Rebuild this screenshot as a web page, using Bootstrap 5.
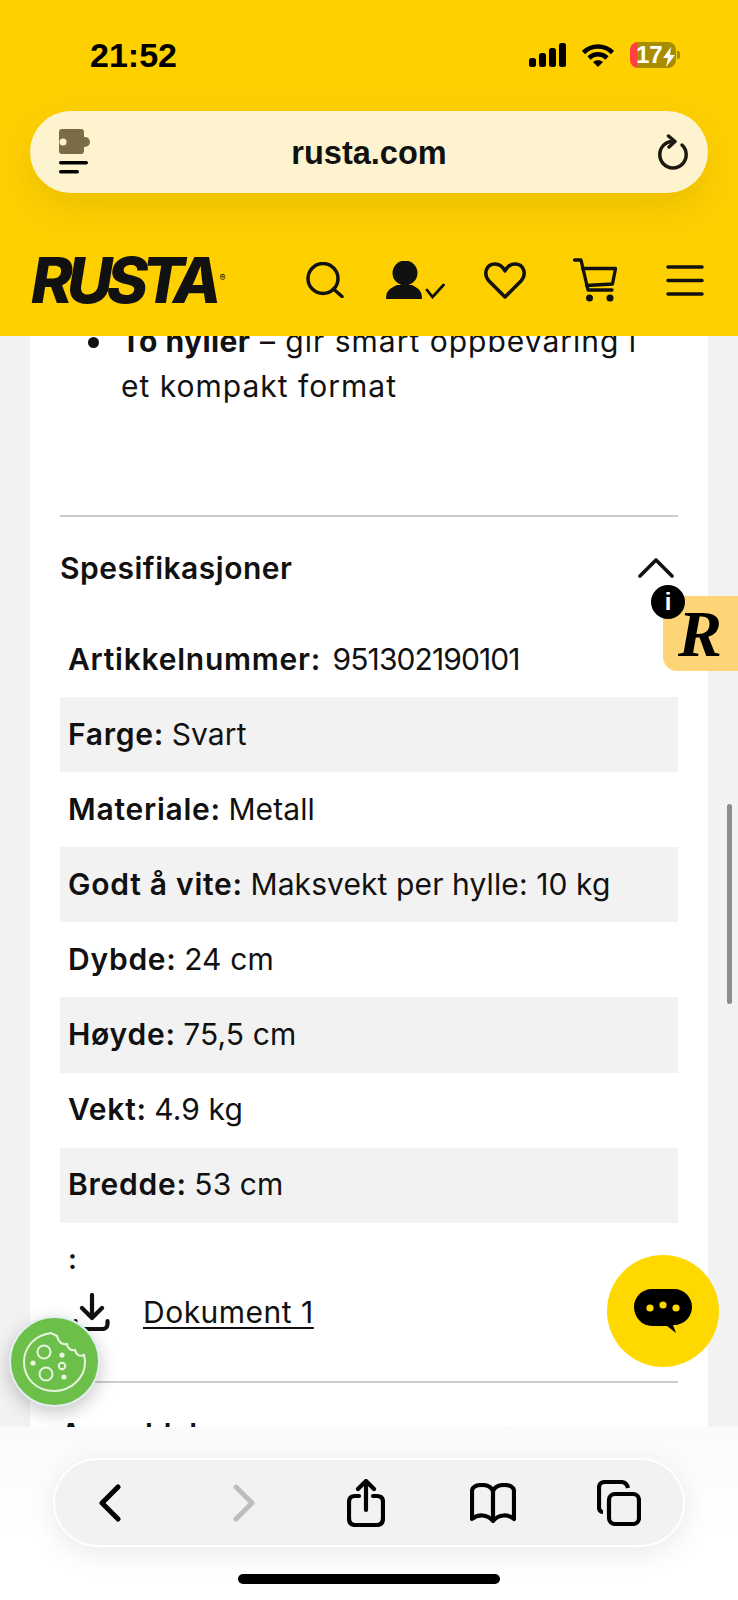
<!DOCTYPE html>
<html lang="no">
<head>
    <meta charset="UTF-8">
    <meta name="viewport" content="width=device-width, initial-scale=1.0">
    <title>Rusta</title>
    <link rel="stylesheet" href="https://cdn.jsdelivr.net/npm/bootstrap@5.3.3/dist/css/bootstrap.min.css">
    <style>
        body { height: 1600px; overflow: hidden; background: #f2f2f2; color: #111; font-family: Inter, "Noto Sans", sans-serif; position: relative; }

        /* top chrome */
        .top-chrome { height: 336px; position: relative; z-index: 5; background: #ffd000; }
        .status-row { height: 111px; padding: 42px 58px 0 90px; }
        .clock { font: 700 34px/27px "Liberation Sans", sans-serif; color: #000; }
        .battery { width: 46px; height: 26px; border-radius: 8px; background: linear-gradient(90deg, #ff4040 0, #ff4040 15%, #a98d00 15%); color: #fff; font: 700 24px/26px "Liberation Sans", sans-serif; padding-left: 6px; white-space: nowrap; }
        .battery-cap { width: 3px; height: 8px; margin-left: 1px; border-radius: 0 2px 2px 0; background: #a98d00; }
        .url-pill { height: 82px; margin: 0 30px; padding: 0 20px 0 29px; border-radius: 41px; background: #fdf3cf; box-shadow: 0 14px 36px rgba(130,100,0,.16); }
        .url-text { font: 700 32.500px/1 "Liberation Sans", sans-serif; color: #111; padding-right: 11px; padding-top: 2px; }
        .site-nav { height: 143px; padding: 31px 8px 0 31px; }
        .rusta-logo { font: italic 800 63px/1 Inter, sans-serif; letter-spacing: -6px; color: #111; }
        .rusta-logo sup { font-size: 9px; font-weight: 400; font-style: normal; letter-spacing: 0; top: -22px; margin-left: 4px; }
        .nav-cell { width: 90px; }

        /* page */
        .page-card { margin: -17px 30px 0; padding: 0 30px; background: #fff; height: 1200px; font-size: 30px; line-height: 45px; }
        .feat-list { padding: 0 30px 0 61px; margin-bottom: 0; letter-spacing: 1px; list-style: none; }
        .feat-list li::before { content: ""; display: inline-block; width: 11px; height: 11px; margin: 0 22.500px 0 -33.500px; border-radius: 50%; background: #111; vertical-align: .12em; }
        .feat-list b { font-weight: 700; letter-spacing: .4px; }
        .rule-top { margin: 106px 0 0; border-top: 2px solid #ccc; opacity: 1; }
        .spec-head { height: 105px; padding-bottom: 3px; font-size: 30px; font-weight: 600; letter-spacing: .5px; }
        .spec-table { margin-bottom: 0; --bs-table-bg: transparent; --bs-table-color: #111; }
        .spec-table td { height: 75.1px; padding: 0 8px 2px; vertical-align: middle; font-size: 30px; line-height: 1; letter-spacing: .1px; }
        .spec-table tr:nth-child(even) td { background: #f2f2f2; }
        .spec-table b { font-weight: 600; letter-spacing: .75px; margin-right: -1px; }
        .art-no { letter-spacing: -.9px; margin-left: 4px; }
        .colon-row { padding: 20px 0 0 8px; font-size: 28px; line-height: 32px; font-weight: 600; }
        .doc-row { height: 71px; margin-top: 2px; padding-left: 13px; gap: 33px; }
        .doc-row a { color: #111; font-size: 30px; letter-spacing: .5px; text-underline-offset: 4px; text-decoration-thickness: 2px; }
        .rule-bottom { margin: 33px 0 0; border-top: 2px solid #ccc; opacity: 1; }
        .next-head { margin-top: 31px; font-size: 30px; font-weight: 600; line-height: 40px; }

        /* floating stuff */
        .float-tab { position: absolute; z-index: 3; left: 663px; top: 596px; width: 75px; height: 75px; background: #fdd576; border-radius: 14px 0 0 14px; font: italic 700 66px/76px "Liberation Serif", serif; color: #000; padding-left: 15px; }
        .float-info { position: absolute; z-index: 4; left: 651px; top: 585px; width: 34px; height: 34px; border-radius: 50%; background: #000; color: #fff; font: 700 24px/34px "Liberation Sans", sans-serif; text-align: center; }
        .float-chat { position: absolute; z-index: 3; left: 607px; top: 1255px; width: 112px; height: 112px; border-radius: 50%; background: #ffd800; }
        .float-cookie { position: absolute; z-index: 3; left: 9px; top: 1316px; width: 91px; height: 91px; border-radius: 50%; background: #6cc04a; border: 2px solid #e3eef0; box-shadow: 0 6px 18px rgba(0,0,0,.22); }
        .scroll-thumb { position: absolute; z-index: 3; left: 727px; top: 804px; width: 5px; height: 200px; border-radius: 3px; background: #8d8d8d; }

        /* safari bottom bar */
        .bottom-chrome { position: absolute; z-index: 6; left: 0; right: 0; bottom: 0; height: 173px; background: linear-gradient(#fafafa, #fbfbfb 12px, #fff 60%); }
        .tool-pill { position: absolute; left: 53px; top: 31px; width: 632px; height: 89px; border-radius: 45px; background: #f2f2f2; border: 2px solid #fff; box-shadow: 0 6px 30px rgba(0,0,0,.09); }
        .tb-back { margin-left: 44px; }
        .tb-fwd { margin-left: 112px; }
        .tb-share { margin-left: 92px; }
        .tb-book { margin-left: 85px; }
        .tb-tabs { margin-left: 81px; }
        .home-bar { position: absolute; left: 238px; top: 147px; width: 262px; height: 10px; border-radius: 5px; background: #000; }
    </style>
</head>
<body>
    <div class="top-chrome">
        <div class="status-row d-flex justify-content-between align-items-start">
            <span class="clock">21:52</span>
            <div class="d-flex align-items-center">
                <svg width="37" height="24" viewBox="0 0 37 24" fill="#000">
                    <rect x="0" y="15" width="7" height="9" rx="2.500"/>
                    <rect x="10" y="10" width="7" height="14" rx="2.500"/>
                    <rect x="20" y="5" width="7" height="19" rx="2.500"/>
                    <rect x="30" y="0" width="7" height="24" rx="2.500"/>
                </svg>
                <svg class="ms-3" width="32" height="23" viewBox="0 0 32 23" fill="none" stroke="#000" stroke-width="4.600">
                    <path d="M1.500 8.500 C9.500 0.500 22.500 0.500 30.500 8.500"/>
                    <path d="M7 14 C12 9 20 9 25 14"/>
                    <path d="M16 23 L11 18 C14 15.500 18 15.500 21 18 Z" fill="#000" stroke="none"/>
                </svg>
                <div class="battery ms-3">17<svg width="12" height="20" viewBox="0 0 12 20" fill="#fff"><path d="M8 0 L0 11 H5 L3 20 L12 8 H7 Z"/></svg></div>
                <div class="battery-cap"></div>
            </div>
        </div>
        <div class="url-pill d-flex align-items-center justify-content-between">
            <svg width="32" height="46" viewBox="0 0 32 46">
                <rect x="0" y="0" width="25" height="25" rx="3" fill="#7a6d45"/>
                <circle cx="26" cy="13" r="5" fill="#7a6d45"/>
                <circle cx="4" cy="13" r="3.500" fill="#fdf3cf"/>
                <rect x="0" y="32" width="29" height="3.500" rx="1.700" fill="#000"/>
                <rect x="0" y="41" width="20" height="3.500" rx="1.700" fill="#000"/>
            </svg>
            <span class="url-text">rusta.com</span>
            <svg width="30" height="36" viewBox="0 0 30 36" fill="none" stroke="#1c1a10" stroke-width="3.500" stroke-linecap="round" stroke-linejoin="round">
                <path d="M15 7.500 C7 7.500 1.800 13.500 1.800 20.500 C1.800 28 7.500 34 15 34 C22.500 34 28.200 28 28.200 20.500 C28.200 16.500 26.700 13.500 24 11"/>
                <path d="M10.500 2 L17 7.500 L11 13"/>
            </svg>
        </div>
        <nav class="site-nav d-flex align-items-center justify-content-between">
            <span class="rusta-logo">RUSTA<sup>®</sup></span>
            <div class="d-flex align-items-center">
                <div class="nav-cell d-flex justify-content-center">
                    <svg width="38" height="36" viewBox="0 0 38 36" fill="none" stroke="#111" stroke-width="3.500" stroke-linecap="round">
                        <circle cx="17" cy="16.500" r="15"/><path d="M27.500 27 L36 34.500"/>
                    </svg>
                </div>
                <div class="nav-cell d-flex justify-content-center">
                    <svg width="59" height="38" viewBox="0 0 59 38" fill="#111">
                        <ellipse cx="19" cy="12" rx="12.500" ry="12.500"/>
                        <path d="M0 38 C0 31 2 28 11 24 H26 C34 28 36 31 36 38 Z"/>
                        <path d="M41 29 L46.500 36 L57.500 24" fill="none" stroke="#111" stroke-width="2.800" stroke-linecap="round"/>
                    </svg>
                </div>
                <div class="nav-cell d-flex justify-content-center">
                    <svg width="42" height="37" viewBox="0 0 42 37" fill="none" stroke="#111" stroke-width="3.500" stroke-linejoin="round">
                        <path d="M21 35 L5 19 C-1 12 2 2 11 2 C16 2 19 5 21 9 C23 5 26 2 31 2 C40 2 43 12 37 19 Z"/>
                    </svg>
                </div>
                <div class="nav-cell d-flex justify-content-center">
                    <svg width="44" height="44" viewBox="0 0 44 44" fill="none" stroke="#111" stroke-width="3.300" stroke-linecap="round" stroke-linejoin="round">
                        <path d="M1.500 2 H8 L15 32 H39"/>
                        <path d="M9.500 10.500 H42.500 L39.500 26 L13.500 27.500"/>
                        <circle cx="16.500" cy="40" r="3.500" fill="#111" stroke="none"/>
                        <circle cx="37" cy="40" r="3.500" fill="#111" stroke="none"/>
                    </svg>
                </div>
                <div class="nav-cell d-flex justify-content-center">
                    <svg width="38" height="31" viewBox="0 0 38 31" stroke="#111" stroke-width="3.500" stroke-linecap="round">
                        <path d="M2 2 H36 M2 15.500 H36 M2 29 H36"/>
                    </svg>
                </div>
            </div>
        </nav>
    </div>

    <main class="page-card">
        <ul class="feat-list">
            <li><b>To hyller</b> – gir smart oppbevaring i et kompakt format</li>
        </ul>
        <hr class="rule-top">
        <div class="spec-head d-flex justify-content-between align-items-center">
            <span>Spesifikasjoner</span>
            <svg class="me-1" width="36" height="20" viewBox="0 0 36 20" fill="none" stroke="#111" stroke-width="3.600" stroke-linecap="round" stroke-linejoin="round">
                <path d="M2 18 L18 2 L34 18"/>
            </svg>
        </div>
        <table class="table table-borderless spec-table">
            <tbody>
                <tr><td><b>Artikkelnummer:</b> <span class="art-no">951302190101</span></td></tr>
                <tr><td><b>Farge:</b> Svart</td></tr>
                <tr><td><b>Materiale:</b> Metall</td></tr>
                <tr><td><b>Godt å vite:</b> Maksvekt per hylle: 10 kg</td></tr>
                <tr><td><b>Dybde:</b> 24 cm</td></tr>
                <tr><td><b>Høyde:</b> 75,5 cm</td></tr>
                <tr><td><b>Vekt:</b> 4.9 kg</td></tr>
                <tr><td><b>Bredde:</b> 53 cm</td></tr>
            </tbody>
        </table>
        <div class="colon-row">:</div>
        <div class="doc-row d-flex align-items-center">
            <svg width="37" height="38" viewBox="0 0 37 38" fill="none" stroke="#111" stroke-width="4.200" stroke-linecap="round" stroke-linejoin="round">
                <path d="M19 2 V24 M9 15 L19 25 L29 15"/>
                <path d="M2.500 28 V31 C2.500 34 4.500 36 7.500 36 H29.500 C32.500 36 34.500 34 34.500 31 V28"/>
            </svg>
            <a href="#">Dokument 1</a>
        </div>
        <hr class="rule-bottom">
        <div class="next-head">Anmeldelser</div>
    </main>

    <div class="float-tab">R</div>
    <div class="float-info">i</div>
    <div class="scroll-thumb"></div>

    <div class="float-chat d-flex align-items-center justify-content-center">
        <svg width="58" height="44" viewBox="0 0 58 44">
            <path d="M18 0 H40 C50 0 58 8 58 18 C58 28 50 36 40 36 H39 L42 44 L33 37 H18 C8 37 0 28 0 18 C0 8 8 0 18 0 Z" fill="#000"/>
            <circle cx="16" cy="19" r="3.600" fill="#ffd800"/>
            <circle cx="29" cy="16" r="3.600" fill="#ffd800"/>
            <circle cx="42" cy="19" r="3.600" fill="#ffd800"/>
        </svg>
    </div>

    <div class="float-cookie d-flex align-items-center justify-content-center">
        <svg width="64" height="60" viewBox="0 0 64 60" fill="none" stroke="#e8f3e0" stroke-width="2">
            <path d="M28 1 C12 3 1 15 1 30 C1 47 14 59 31 59 C48 59 62 46 62 30 C62 27 61.500 25 61 23 C57 25 53 23 52 18 C48 19 44 16 44 12 C39 13 35 10 34 4 C32 3 30 2 28 1 Z"/>
            <circle cx="21" cy="20" r="6.500"/>
            <circle cx="23" cy="42" r="6.500"/>
            <circle cx="39" cy="34" r="3.200"/>
            <circle cx="10" cy="31" r="2.600" fill="#e8f3e0" stroke="none"/>
            <circle cx="39" cy="23" r="2.600" fill="#e8f3e0" stroke="none"/>
            <circle cx="41" cy="45" r="2.600" fill="#e8f3e0" stroke="none"/>
        </svg>
    </div>

    <div class="bottom-chrome">
        <div class="tool-pill d-flex align-items-center">
            <svg class="tb-back" width="22" height="38" viewBox="0 0 22 38" fill="none" stroke="#000" stroke-width="5" stroke-linecap="round" stroke-linejoin="round">
                <path d="M19 3 L3 19 L19 35"/>
            </svg>
            <svg class="tb-fwd" width="22" height="38" viewBox="0 0 22 38" fill="none" stroke="#bdbdbd" stroke-width="5" stroke-linecap="round" stroke-linejoin="round">
                <path d="M3 3 L19 19 L3 35"/>
            </svg>
            <svg class="tb-share" width="38" height="48" viewBox="0 0 38 48" fill="none" stroke="#000" stroke-width="4.200" stroke-linecap="round" stroke-linejoin="round">
                <path d="M12 17 H8 C4 17 2 19 2 23 V39 C2 44 4 46 8 46 H30 C34 46 36 44 36 39 V23 C36 19 34 17 30 17 H26"/>
                <path d="M19 31 V3 M11 10 L19 2 L27 10"/>
            </svg>
            <svg class="tb-book" width="46" height="40" viewBox="0 0 46 40" fill="none" stroke="#000" stroke-width="4.200" stroke-linecap="round" stroke-linejoin="round">
                <path d="M23 8 C21 3 17 2 12 2 C6 2 2 4 2 8 V36 C8 31 17 31 23 38 C29 31 38 31 44 36 V8 C44 4 40 2 34 2 C29 2 25 3 23 8 Z"/>
                <path d="M23 8 V37"/>
            </svg>
            <svg class="tb-tabs" width="44" height="46" viewBox="0 0 44 46" fill="none" stroke="#000" stroke-width="4.200" stroke-linejoin="round">
                <rect x="12" y="14" width="30" height="30" rx="6"/>
                <path d="M6 32 C3 32 2 30 2 27 V8 C2 4 4 2 8 2 H24 C28 2 30 4 31 8"/>
            </svg>
        </div>
        <div class="home-bar"></div>
    </div>
</body>
</html>
